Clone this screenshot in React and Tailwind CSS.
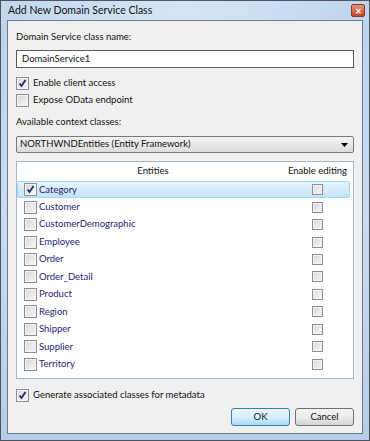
import React from 'react';

const entities = [
  'Category',
  'Customer',
  'CustomerDemographic',
  'Employee',
  'Order',
  'Order_Detail',
  'Product',
  'Region',
  'Shipper',
  'Supplier',
  'Territory',
];

const Check = ({ checked, small }) => (
  <span
    className={`inline-flex items-center justify-center shrink-0 border border-[#8f8f8f] bg-gradient-to-br from-[#d8d8d8] to-[#f7f7f7] ${
      small ? 'w-[11px] h-[11px]' : 'w-[13px] h-[13px]'
    }`}
  >
    <span className="flex items-center justify-center w-full h-full border border-[#f4f4f4]">
      {checked && (
        <svg width="9" height="9" viewBox="0 0 9 9">
          <path d="M1.5 4.5 L3.5 7 L7.5 1" fill="none" stroke="#1e2a78" strokeWidth="1.8" />
        </svg>
      )}
    </span>
  </span>
);

const CheckRow = ({ checked, label }) => (
  <div className="flex items-center gap-[4px] h-[16px]">
    <Check checked={checked} />
    <span>{label}</span>
  </div>
);

const App = () => {
  return (
    <div
      className="w-[370px] h-[441px] flex flex-col border border-[#4d5560] bg-gradient-to-b from-[#bcd3ec] via-[#c9dcf1] to-[#b6cde6] text-[9.5px] text-[#111] overflow-hidden"
      style={{ fontFamily: 'Lato, "Open Sans", sans-serif' }}
    >
      {/* title bar */}
      <div className="h-[19px] flex items-center justify-between pl-[7px] pr-[4px] bg-gradient-to-r from-[#c2d8ef] via-[#d6e5f5] to-[#bfd5ee]">
        <span className="text-[10.5px] leading-none">Add New Domain Service Class</span>
        <span className="w-[14px] h-[13px] flex items-center justify-center rounded-[2px] border border-[#8a3a2a] bg-gradient-to-b from-[#e8937a] to-[#c4432a] text-white text-[8px] font-bold leading-none">
          ✕
        </span>
      </div>

      {/* client area */}
      <div className="flex-1 mx-[6px] mb-[6px] border border-[#6d7a88] bg-[#f0f0f0] flex flex-col px-[8px] pt-[8px]">
        <div className="h-[16px] leading-[16px]">Domain Service class name:</div>
        <div className="mt-[5px] h-[18px] border border-[#5a5a5a] bg-white flex items-center px-[5px]">
          DomainService1
        </div>

        <div className="mt-[7px]">
          <CheckRow checked label="Enable client access" />
        </div>
        <div className="mt-[1px]">
          <CheckRow label="Expose OData endpoint" />
        </div>

        <div className="mt-[6px] h-[16px] leading-[16px]">Available context classes:</div>
        <div className="mt-[6px] h-[17px] rounded-[2px] border border-[#7a7a7a] bg-gradient-to-b from-[#f4f4f4] to-[#dcdcdc] flex items-center justify-between pl-[3px] pr-[5px]">
          <span>NORTHWNDEntities (Entity Framework)</span>
          <svg width="7" height="4" viewBox="0 0 7 4">
            <path d="M0 0 H7 L3.5 4 Z" fill="#000" />
          </svg>
        </div>

        {/* entity table */}
        <div className="mt-[8px] h-[218px] border border-[#a9b8c8] bg-white flex flex-col">
          <div className="h-[19px] flex items-center">
            <div className="flex-1 text-center pl-[4px]">Entities</div>
            <div className="w-[68px] text-right pr-[6px] whitespace-nowrap">Enable editing</div>
          </div>
          <div className="flex flex-col">
            {entities.map((name, i) => (
              <div
                key={name}
                className={`h-[17.45px] flex items-center mr-[3px] ${
                  i === 0
                    ? 'border border-[#9fd6f7] bg-gradient-to-b from-[#e6f4fc] to-[#c3e4f8] rounded-[2px]'
                    : 'border border-transparent'
                }`}
              >
                <div className="flex-1 flex items-center gap-[2px] pl-[6px] text-[#242474]">
                  <Check checked={i === 0} />
                  <span>{name}</span>
                </div>
                <div className="w-[37px] flex">
                  <Check small />
                </div>
              </div>
            ))}
          </div>
        </div>

        <div className="mt-[8px]">
          <CheckRow checked label="Generate associated classes for metadata" />
        </div>

        <div className="mt-[5px] flex justify-end gap-[5px]">
          <button className="w-[59px] h-[18px] rounded-[3px] border border-[#3c7fb1] bg-gradient-to-b from-[#eaf6fd] via-[#d9f0fc] to-[#a7d9f5] leading-none">
            OK
          </button>
          <button className="w-[59px] h-[18px] rounded-[3px] border border-[#707070] bg-gradient-to-b from-[#f2f2f2] via-[#ebebeb] to-[#d4d4d4] leading-none">
            Cancel
          </button>
        </div>
      </div>
    </div>
  );
};

export default App;
